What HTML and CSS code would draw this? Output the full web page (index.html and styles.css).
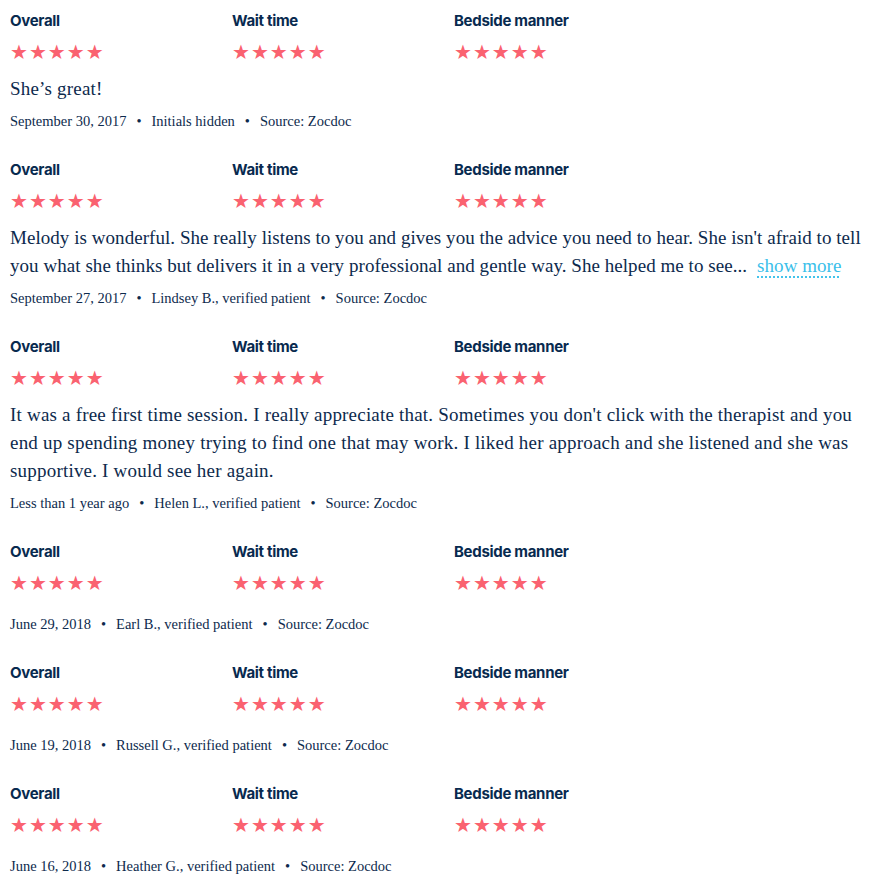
FILE: index.html
```html
<!DOCTYPE html>
<html lang="en">
<head>
    <meta charset="UTF-8">
    <meta name="viewport" content="width=device-width, initial-scale=1.0">
    <link rel="stylesheet" href="styles.css">
    <title>Reviews</title>
</head>
<body>
    <div class="reviews">
        <div class="review">
            <div class="ratings">
                <div class="rating"><h4>Overall</h4><div class="stars">★★★★★</div></div>
                <div class="rating"><h4>Wait time</h4><div class="stars">★★★★★</div></div>
                <div class="rating"><h4>Bedside manner</h4><div class="stars">★★★★★</div></div>
            </div>
            <p class="comment">She’s great!</p>
            <p class="meta"><span>September 30, 2017</span><span>Initials hidden</span><span>Source: Zocdoc</span></p>
        </div>

        <div class="review">
            <div class="ratings">
                <div class="rating"><h4>Overall</h4><div class="stars">★★★★★</div></div>
                <div class="rating"><h4>Wait time</h4><div class="stars">★★★★★</div></div>
                <div class="rating"><h4>Bedside manner</h4><div class="stars">★★★★★</div></div>
            </div>
            <p class="comment truncated">Melody is wonderful. She really listens to you and gives you the advice you need to hear. She isn't afraid to tell you what she thinks but delivers it in a very professional and gentle way. She helped me to see...<a class="more" href="#">show more</a></p>
            <p class="meta"><span>September 27, 2017</span><span>Lindsey B., verified patient</span><span>Source: Zocdoc</span></p>
        </div>

        <div class="review">
            <div class="ratings">
                <div class="rating"><h4>Overall</h4><div class="stars">★★★★★</div></div>
                <div class="rating"><h4>Wait time</h4><div class="stars">★★★★★</div></div>
                <div class="rating"><h4>Bedside manner</h4><div class="stars">★★★★★</div></div>
            </div>
            <p class="comment">It was a free first time session. I really appreciate that. Sometimes you don't click with the therapist and you end up spending money trying to find one that may work. I liked her approach and she listened and she was supportive. I would see her again.</p>
            <p class="meta"><span>Less than 1 year ago</span><span>Helen L., verified patient</span><span>Source: Zocdoc</span></p>
        </div>

        <div class="review">
            <div class="ratings">
                <div class="rating"><h4>Overall</h4><div class="stars">★★★★★</div></div>
                <div class="rating"><h4>Wait time</h4><div class="stars">★★★★★</div></div>
                <div class="rating"><h4>Bedside manner</h4><div class="stars">★★★★★</div></div>
            </div>
            <p class="meta"><span>June 29, 2018</span><span>Earl B., verified patient</span><span>Source: Zocdoc</span></p>
        </div>

        <div class="review">
            <div class="ratings">
                <div class="rating"><h4>Overall</h4><div class="stars">★★★★★</div></div>
                <div class="rating"><h4>Wait time</h4><div class="stars">★★★★★</div></div>
                <div class="rating"><h4>Bedside manner</h4><div class="stars">★★★★★</div></div>
            </div>
            <p class="meta"><span>June 19, 2018</span><span>Russell G., verified patient</span><span>Source: Zocdoc</span></p>
        </div>

        <div class="review">
            <div class="ratings">
                <div class="rating"><h4>Overall</h4><div class="stars">★★★★★</div></div>
                <div class="rating"><h4>Wait time</h4><div class="stars">★★★★★</div></div>
                <div class="rating"><h4>Bedside manner</h4><div class="stars">★★★★★</div></div>
            </div>
            <p class="meta"><span>June 16, 2018</span><span>Heather G., verified patient</span><span>Source: Zocdoc</span></p>
        </div>
    </div>
</body>
</html>
```

FILE: styles.css
```css
body {
    margin: 0;
    background: white;
    color: #0d2a4d;
}

.reviews {
    padding: 9px 8px 0 10px;
}

.review {
    margin-bottom: 28px;
}

.ratings {
    display: grid;
    grid-template-columns: 222px 222px 222px;
}

.rating h4 {
    margin: 0;
    color: #082a4f;
    font-family: Inter, sans-serif;
    font-weight: 700;
    font-size: 15px;
    letter-spacing: -0.3px;
    line-height: 24px;
}

.stars {
    color: #fa6270;
    font-family: "DejaVu Sans", sans-serif;
    font-size: 20px;
    line-height: 22px;
    margin-top: 8px;
    letter-spacing: 1px;
}

.comment {
    margin: 12px 0 0 0;
    font-family: "Liberation Serif", serif;
    font-size: 19px;
    letter-spacing: 0.2px;
    line-height: 28px;
}

/* cut off text, shown with the link */
.comment.truncated {
    letter-spacing: 0.05px;
}

.more {
    color: #3ac0ea;
    text-decoration: underline dotted #3ac0ea;
    text-underline-offset: 5px;
    margin-left: 10px;
}

.meta {
    margin: 9px 0 0 0;
    font-family: "Liberation Serif", serif;
    font-size: 14.5px;
    line-height: 18px;
}

.ratings + .meta {
    margin-top: 21px;
}

.meta span + span::before {
    content: "•";
    margin: 0 10px;
}
```
